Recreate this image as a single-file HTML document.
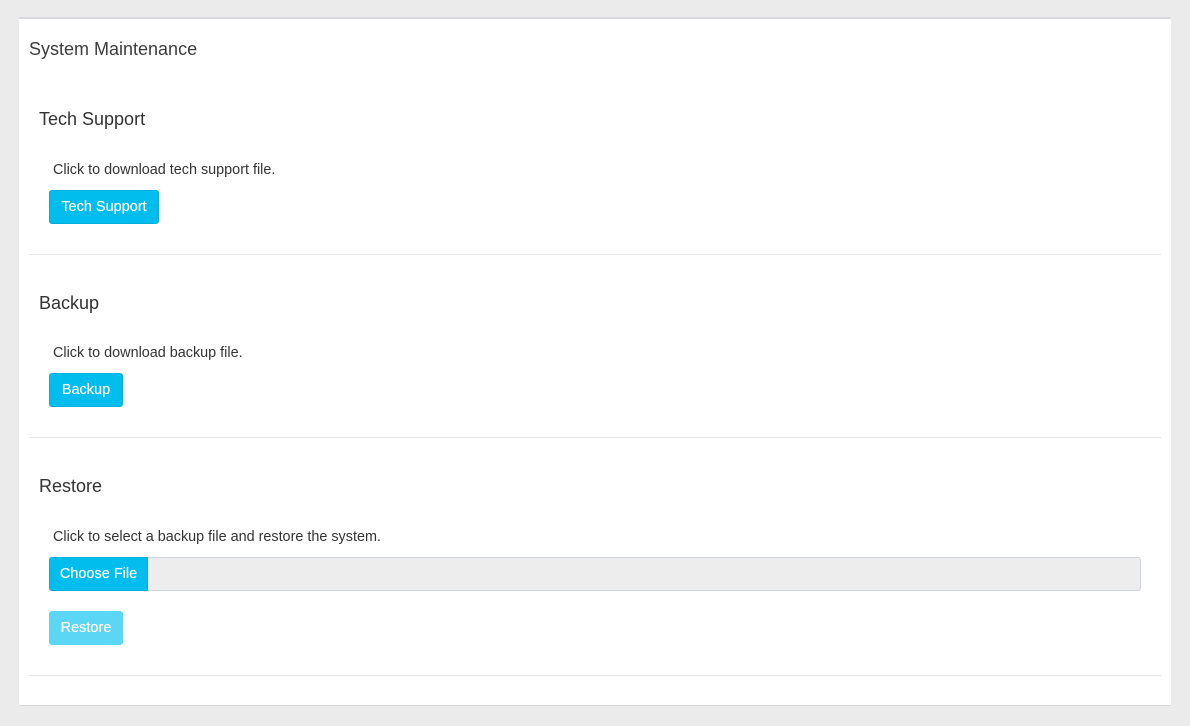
<!DOCTYPE html>
<html><head><style>
body{margin:0;background:#ebebeb;font-family:"Liberation Sans",sans-serif;width:1190px;height:726px;position:relative;overflow:hidden}
.card{position:absolute;left:19px;top:17px;width:1152px;height:686px;background:#fff;border-top:2px solid #d9d7e0;border-bottom:1px solid #d6d6d6;border-radius:2px}
.t{position:absolute;color:#333}
.sec{position:absolute;left:10px;width:1132px;border-bottom:1px solid #e6e6e6}
.btn{position:absolute;background:#00bdee;color:#fff;font-size:14.5px;border:1px solid #00aedb;border-radius:3px;box-sizing:border-box;height:34px;line-height:32px;text-align:center;text-shadow:0 0 0.4px #fff}
.p{font-size:14.4px}
</style></head><body>
<div class="card">
<div class="t" style="left:10px;top:20px;font-size:18px;color:#3c3c3c">System Maintenance</div>
<div class="sec" style="top:72px;height:163px"></div>
<div class="sec" style="top:236px;height:182px"></div>
<div class="sec" style="top:419px;height:237px"></div>
<div class="t" style="left:20px;top:90px;font-size:18px">Tech Support</div>
<div class="t p" style="left:34px;top:143px">Click to download tech support file.</div>
<div class="btn" style="left:30px;top:171px;width:110px">Tech Support</div>
<div class="t" style="left:20px;top:274px;font-size:18px">Backup</div>
<div class="t p" style="left:34px;top:326px">Click to download backup file.</div>
<div class="btn" style="left:30px;top:354px;width:74px">Backup</div>
<div class="t" style="left:20px;top:457px;font-size:18px">Restore</div>
<div class="t p" style="left:34px;top:510px">Click to select a backup file and restore the system.</div>
<div style="position:absolute;left:30px;top:538px;width:1092px;height:34px;background:#ededee;border:1px solid #cfd4dc;box-sizing:border-box;border-radius:3px"></div>
<div class="btn" style="left:30px;top:538px;width:99px;border-radius:3px 0 0 3px">Choose File</div>
<div class="btn" style="left:30px;top:592px;width:74px;background:#5bd6f4;border-color:#5bd6f4">Restore</div>
</div>
</body></html>
